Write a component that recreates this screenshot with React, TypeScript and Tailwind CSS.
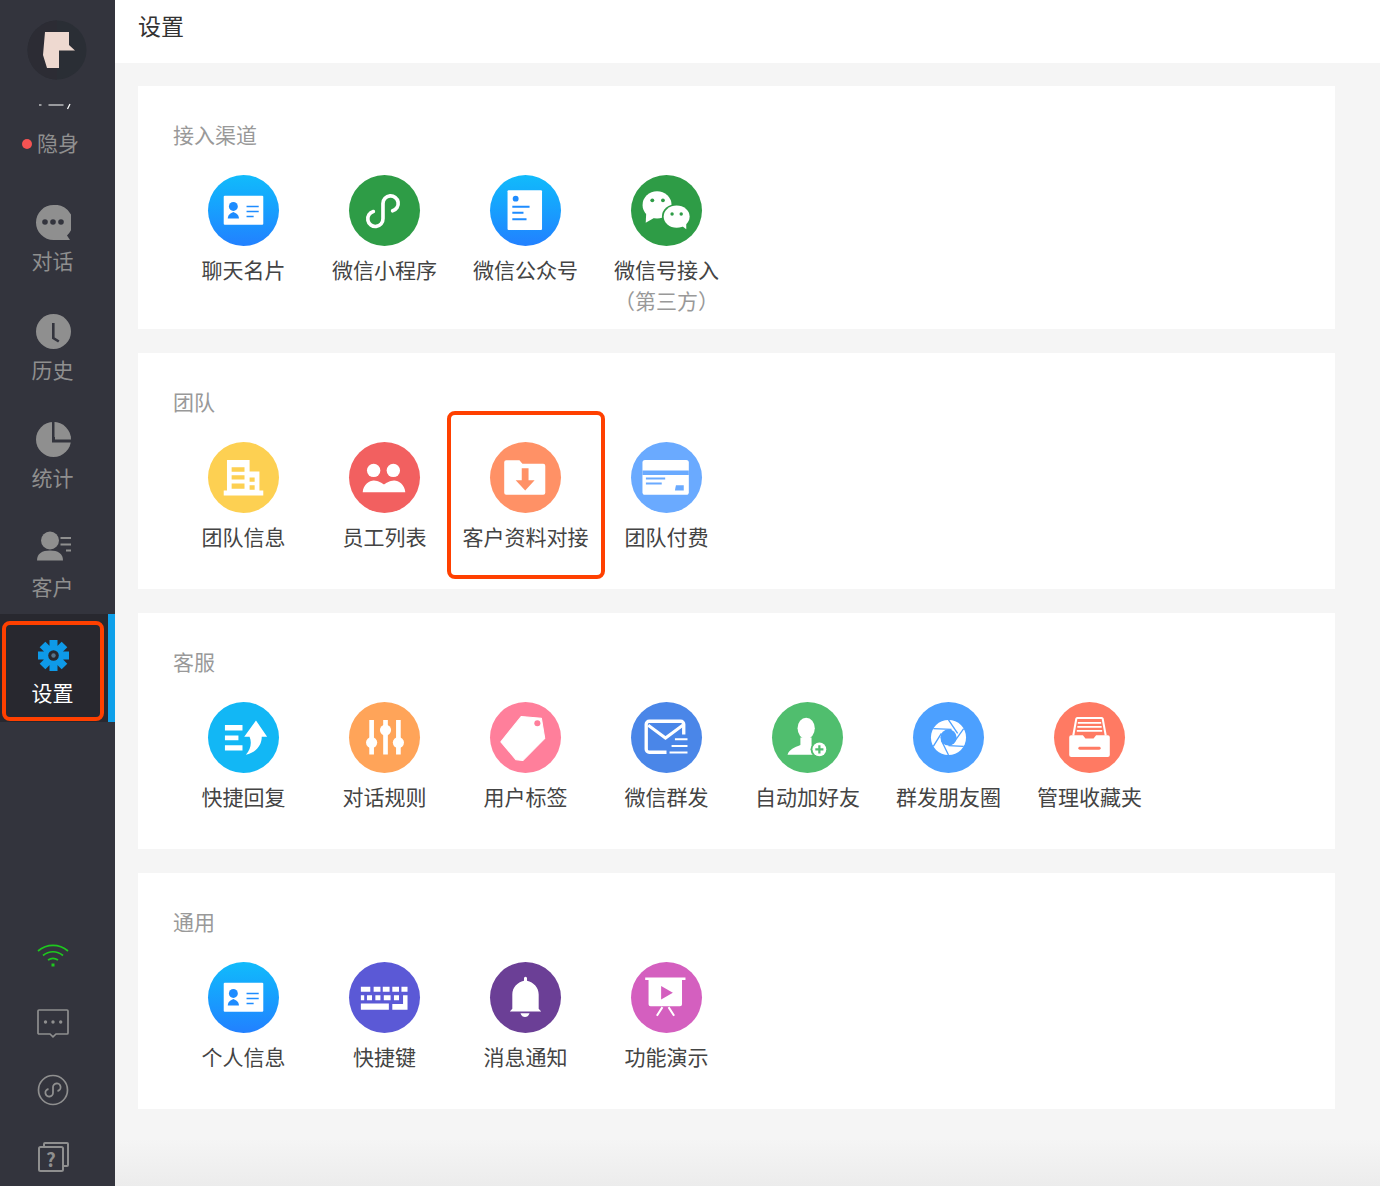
import type { ReactNode } from "react";

const GREY = "#8f8f8f";
const DARK = "#33343d";

function Glyph({ children }: Readonly<{ children: ReactNode }>) {
  return (
    <svg viewBox="0 0 70 70" className="size-full" aria-hidden>
      {children}
    </svg>
  );
}

function IdCard({ color = "#1e8cff" }: Readonly<{ color?: string }>) {
  return (
    <Glyph>
      <rect x="15.5" y="20.5" width="39" height="28.5" rx="1" fill="#fff" />
      <circle cx="25" cy="31" r="4.4" fill={color} />
      <path d="M19.5 43c0-4 3-5.5 5.5-6.5 2.5 1 5.5 2.5 5.5 6.5z" fill={color} />
      <path d="M38 31h12M38 36h12M38 41h7" stroke={color} strokeWidth="1.5" />
    </Glyph>
  );
}

function MiniProgram() {
  return (
    <Glyph>
      <path
        d="M24 36A7.5 7.5 0 1 0 33.5 43V28A7.5 7.5 0 1 1 43 35.3"
        fill="none"
        stroke="#fff"
        strokeWidth="3.6"
        strokeLinecap="round"
      />
    </Glyph>
  );
}

function OfficialDoc() {
  return (
    <Glyph>
      <rect x="17.3" y="15" width="34" height="39.3" rx="1" fill="#fff" />
      <circle cx="25.3" cy="23.3" r="2.9" fill="#1e8cff" />
      <path d="M22 31.3h17M22 37.3h11M22 43.7h14" stroke="#1e8cff" strokeWidth="2" />
    </Glyph>
  );
}

function WeChat() {
  return (
    <Glyph>
      <ellipse cx="25.7" cy="29.5" rx="14.3" ry="13.5" fill="#fff" />
      <path d="M15 38l-0.500 9 9-5z" fill="#fff" />
      <circle cx="21" cy="25" r="1.9" fill="#2e9c46" />
      <circle cx="31.500" cy="25" r="1.9" fill="#2e9c46" />
      <ellipse cx="45" cy="41" rx="14.500" ry="12.500" fill="#2e9c46" />
      <ellipse cx="45" cy="41" rx="12.800" ry="11" fill="#fff" />
      <path d="M50 50l4.500 3.500v-7z" fill="#fff" />
      <circle cx="40.500" cy="38.500" r="1.700" fill="#2e9c46" />
      <circle cx="49.500" cy="38.500" r="1.700" fill="#2e9c46" />
    </Glyph>
  );
}

function Building() {
  const c = "#fdd052";
  return (
    <Glyph>
      <path d="M15.500 47.700h3.200v-30H41V29h9.700v18.700h3.800v5h-39z" fill="#fff" />
      <path d="M23.300 25H36v4.300H23.300zM23.300 32.700H36V37H23.300zM23.300 41H36v5H23.300zM41 35h5v4.300h-5zM41 42.700h5V47h-5z" fill={c} />
    </Glyph>
  );
}

function Staff() {
  return (
    <Glyph>
      <circle cx="24.300" cy="28" r="6.600" fill="#fff" />
      <circle cx="43.700" cy="28" r="6.600" fill="#fff" />
      <path d="M13.500 49.500C14 42 20 38 24.500 38c4.500 0 8.500 3 10 4 1.500-1 5.500-4 10-4 4.500 0 10.500 4 11 11.500z" fill="#fff" />
    </Glyph>
  );
}

function FolderDown() {
  return (
    <Glyph>
      <path d="M16 18h13l3 3.500h20.500a2 2 0 0 1 2 2V50a2 2 0 0 1-2 2H16a2 2 0 0 1-2-2V20a2 2 0 0 1 2-2z" fill="#fff" />
      <path d="M31.300 26H38v11.700h6L34.700 47.700 25.300 37.700h6z" fill="#ff9166" />
    </Glyph>
  );
}

function PayCard() {
  const c = "#6aaaff";
  return (
    <Glyph>
      <rect x="11.300" y="17.700" width="45.700" height="34.300" rx="2.500" fill="#fff" />
      <path d="M11.300 28h45.700v4.500H11.300z" fill={c} />
      <path d="M14.700 36h19M14.700 41h15.600" stroke={c} strokeWidth="2" />
      <path d="M44.300 42.700H52v5h-8.700z" fill={c} />
    </Glyph>
  );
}

function QuickReply() {
  return (
    <Glyph>
      <path d="M16.700 22.700H34V28H16.700zM16.700 33H30v4.700H16.700zM16.700 42.700H34v5H16.700z" fill="#fff" />
      <path d="M47.300 18.300 58.300 34.300H53C53 43 47 50 37.300 52 42 47 43.500 40 41 34.300H35.700z" fill="#fff" />
    </Glyph>
  );
}

function Sliders() {
  return (
    <Glyph>
      <path d="M22.300 17.700v34M36 17.700v34M48.700 17.700v34" stroke="#fff" strokeWidth="4.600" />
      <circle cx="22.300" cy="40" r="5.500" fill="#fff" />
      <circle cx="36" cy="27.700" r="5.500" fill="#fff" />
      <circle cx="48.700" cy="40" r="5.500" fill="#fff" />
    </Glyph>
  );
}

function Tag() {
  return (
    <Glyph>
      <path d="M30.700 14.300 50.700 16 54 36 32.300 57.700 25.700 57 10.700 39.300z" fill="#fff" strokeLinejoin="round" stroke="#fff" />
      <circle cx="46.700" cy="21" r="3" fill="#ff7f9b" />
    </Glyph>
  );
}

function MassMail() {
  return (
    <Glyph>
      <path d="M35 49.500H18a3 3 0 0 1-3-3V22a3 3 0 0 1 3-3h31a3 3 0 0 1 3 3v10" fill="none" stroke="#fff" strokeWidth="3.300" />
      <path d="M17 23l17 12.500L51 23" fill="none" stroke="#fff" strokeWidth="3" />
      <path d="M43.300 36.700h12.400M40 43.300h15.700M38 49.700h17.700" stroke="#fff" strokeWidth="2" />
    </Glyph>
  );
}

function AddFriend() {
  return (
    <Glyph>
      <ellipse cx="33.700" cy="26" rx="8.500" ry="10.500" fill="#fff" />
      <path d="M15.300 52C17 47 22 45 28 42.500V35h11v7.500c3 1.500 6 2.500 8 4.500v5z" fill="#fff" />
      <circle cx="46.700" cy="46.700" r="8.700" fill="#50be6e" />
      <circle cx="46.700" cy="46.700" r="6.800" fill="#fff" />
      <path d="M46.700 42.700v8M42.700 46.700h8" stroke="#50be6e" strokeWidth="2.200" />
    </Glyph>
  );
}

function Aperture() {
  const c = "#4ca0ff";
  return (
    <Glyph>
      <circle cx="35" cy="35" r="17.300" fill="#fff" />
      <g stroke={c} strokeWidth="1.300">
        <path d="M35 17.700 44 31" />
        <path d="M50 26.300 41.500 38" />
        <path d="M50 43.700 35 43" />
        <path d="M35 52.300 28 38" />
        <path d="M20 43.700 28 31" />
        <path d="M20 26.300 38 27" />
      </g>
      <circle cx="35" cy="35" r="8" fill={c} />
    </Glyph>
  );
}

function Drawer() {
  const c = "#ff7a63";
  return (
    <Glyph>
      <path d="M19 33l3-16.500a1 1 0 0 1 1-.800h24a1 1 0 0 1 1 .800L51 33" fill="none" stroke="#fff" strokeWidth="2" />
      <path d="M23.500 20.500h23M23 24.500h24M22.500 28.500h25" stroke="#fff" strokeWidth="1.800" />
      <path d="M17 32.700h11.500L31 36h8l2.500-3.300H53a2 2 0 0 1 2 2v17.600a2 2 0 0 1-2 2H17a2 2 0 0 1-2-2V34.700a2 2 0 0 1 2-2z" fill="#fff" />
      <rect x="24" y="44.200" width="22" height="2.800" rx="1.400" fill={c} />
    </Glyph>
  );
}

function Keyboard() {
  return (
    <Glyph>
      <path
        d="M11.700 24.300h9.300v5h-9.300zM24.300 24.300H31v5h-6.700zM33.300 24.300H40v5h-6.700zM42.700 24.300h6.600v5h-6.600zM51.700 24.300h6v5h-6zM11.700 32.700h3.300v5h-3.300zM17.700 32.700h5v5h-5zM26 32.700h5v5h-5zM34.300 32.700H41v5h-6.700zM44.300 32.700h5v5h-5zM53.300 32.700h4.400V47H42.700v-5.700h10.600zM11.700 41h27.600v6H11.700z"
        fill="#fff"
      />
    </Glyph>
  );
}

function Bell() {
  return (
    <Glyph>
      <path d="M33.500 16a1.500 1.500 0 0 1 3 0v2.500C43 20 48 25 48 32v14l2.500 2.800h-31L22 46V32c0-7 5-12 11.500-13.500z" fill="#fff" />
      <path d="M30 50.500h9C38 53 36.500 54.300 34.500 54.300S31 53 30 50.500z" fill="#fff" />
    </Glyph>
  );
}

function Demo() {
  return (
    <Glyph>
      <path d="M14 15.300h39.700v2.400h-3.400v24a2 2 0 0 1-2 2H19.300a2 2 0 0 1-2-2v-24H14z" fill="#fff" />
      <path d="M29.700 23.700 41.300 30.300 29.700 37z" fill="#d45fbf" />
      <path d="M31 44.500 25.500 53M37 44.500 42.500 53" stroke="#fff" strokeWidth="2" />
    </Glyph>
  );
}

type Entry = {
  label: string;
  sub?: string;
  bg: string;
  icon: ReactNode;
  marked?: boolean;
};

const SKY = "bg-linear-to-b from-[#12bbfb] to-[#2280ff]";

const SECTIONS: { title: string; pb: string; items: Entry[] }[] = [
  {
    title: "接入渠道",
    pb: "pb-[14px]",
    items: [
      { label: "聊天名片", bg: SKY, icon: <IdCard /> },
      { label: "微信小程序", bg: "bg-[#2e9c46]", icon: <MiniProgram /> },
      { label: "微信公众号", bg: SKY, icon: <OfficialDoc /> },
      { label: "微信号接入", sub: "（第三方）", bg: "bg-[#2e9c46]", icon: <WeChat /> },
    ],
  },
  {
    title: "团队",
    pb: "pb-[38px]",
    items: [
      { label: "团队信息", bg: "bg-[#fdd052]", icon: <Building /> },
      { label: "员工列表", bg: "bg-[#f26060]", icon: <Staff /> },
      { label: "客户资料对接", bg: "bg-[#ff9166]", icon: <FolderDown />, marked: true },
      { label: "团队付费", bg: "bg-[#6aaaff]", icon: <PayCard /> },
    ],
  },
  {
    title: "客服",
    pb: "pb-[38px]",
    items: [
      { label: "快捷回复", bg: "bg-[#12b7f5]", icon: <QuickReply /> },
      { label: "对话规则", bg: "bg-[#ffa459]", icon: <Sliders /> },
      { label: "用户标签", bg: "bg-[#ff7f9b]", icon: <Tag /> },
      { label: "微信群发", bg: "bg-[#4a86e8]", icon: <MassMail /> },
      { label: "自动加好友", bg: "bg-[#50be6e]", icon: <AddFriend /> },
      { label: "群发朋友圈", bg: "bg-[#4ca0ff]", icon: <Aperture /> },
      { label: "管理收藏夹", bg: "bg-[#ff7a63]", icon: <Drawer /> },
    ],
  },
  {
    title: "通用",
    pb: "pb-[38px]",
    items: [
      { label: "个人信息", bg: SKY, icon: <IdCard /> },
      { label: "快捷键", bg: "bg-[#5b59d6]", icon: <Keyboard /> },
      { label: "消息通知", bg: "bg-[#6b3f96]", icon: <Bell /> },
      { label: "功能演示", bg: "bg-[#d45fbf]", icon: <Demo /> },
    ],
  },
];

function SettingItem({ item }: Readonly<{ item: Entry }>) {
  return (
    <div className="relative flex w-[141px] flex-col items-center">
      {item.marked && (
        <div className="absolute -top-[31px] -right-[9px] -bottom-[28px] -left-[8px] rounded-lg border-4 border-[#ff4000]" />
      )}
      <div className={`size-[71px] rounded-full ${item.bg}`}>{item.icon}</div>
      <span className="mt-2 text-[21px] leading-[30px] whitespace-nowrap text-[#444]">
        {item.label}
      </span>
      {item.sub && (
        <span className="mt-px text-[21px] leading-[30px] whitespace-nowrap text-[#999]">
          {item.sub}
        </span>
      )}
    </div>
  );
}

const ChatIcon = (
  <svg viewBox="0 0 35 35" className="size-[35px]" aria-hidden>
    <path d="M17.500 0a17.500 17.500 0 1 0 0 35H34l-3-4.500A17.500 17.500 0 0 0 17.500 0z" fill={GREY} />
    <g fill={DARK}>
      <circle cx="9" cy="17" r="2.800" />
      <circle cx="17" cy="17" r="2.800" />
      <circle cx="25" cy="17" r="2.800" />
    </g>
  </svg>
);

const ClockIcon = (
  <svg viewBox="0 0 35 35" className="size-[35px]" aria-hidden>
    <circle cx="17.500" cy="17.500" r="17.500" fill={GREY} />
    <path d="M17.300 9v15l5.500 3.500" fill="none" stroke={DARK} strokeWidth="2.600" />
  </svg>
);

const PieIcon = (
  <svg viewBox="0 0 35 35" className="size-[35px]" aria-hidden>
    <circle cx="17.500" cy="17.500" r="17.500" fill={GREY} />
    <path d="M17.500 0v19H35" fill="none" stroke={DARK} strokeWidth="3" />
    <path d="M19 0v15h16" fill="none" stroke={GREY} strokeWidth="1" />
  </svg>
);

const CustomerIcon = (
  <svg viewBox="0 0 35 35" className="size-[35px]" aria-hidden>
    <circle cx="14" cy="9.500" r="9" fill={GREY} />
    <path d="M1 29.500c0-7 5-10 13-10s13 3 13 10z" fill={GREY} />
    <path d="M24.500 7H35M24.500 13.500H35M30 19.500H35" stroke={GREY} strokeWidth="2.200" />
  </svg>
);

const GEAR_TEETH = [0, 45, 90, 135];

const GearIcon = (
  <svg viewBox="0 0 35 35" className="size-[35px]" aria-hidden>
    <g fill="#0e9ae8">
      {GEAR_TEETH.map((deg) => (
        <rect key={deg} x="13.500" y="2" width="8" height="31" transform={`rotate(${deg} 17.500 17.500)`} />
      ))}
      <circle cx="17.500" cy="17.500" r="10.500" />
    </g>
    <circle cx="17.500" cy="17.500" r="5.300" fill="#28282f" />
    <circle cx="17.500" cy="17.500" r="2.200" fill="#56738a" />
  </svg>
);

const NAV = [
  { label: "对话", icon: ChatIcon, h: "h-[109px]" },
  { label: "历史", icon: ClockIcon, h: "h-[108px]" },
  { label: "统计", icon: PieIcon, h: "h-[109px]" },
  { label: "客户", icon: CustomerIcon, h: "h-[108px]" },
];

function Sidebar() {
  return (
    <aside className="flex h-full w-[115px] shrink-0 flex-col bg-[#33343d]">
      <svg viewBox="0 0 60 60" className="mt-5 ml-[27px] size-[60px] shrink-0" aria-hidden>
        <circle cx="30" cy="30" r="29.500" fill="#2a2e35" />
        <path d="M30 .500a29.500 29.500 0 0 0 0 59z" fill="#2c2c34" />
        <path d="M18 12h24v13l6 5.500H32V48H20l-4-13z" fill="#eed9d0" />
      </svg>
      <svg viewBox="0 0 115 10" className="mt-5 h-2.5 w-[115px] shrink-0" aria-hidden>
        <path d="M39 5h2.500M48.500 5h15" stroke="#fff" strokeWidth="1.200" />
        <path d="M70 4 67.500 9" stroke="#fff" strokeWidth="1.300" />
      </svg>
      <div className="mt-[17px] flex items-center pl-[22px]">
        <span className="mt-[3px] size-2.5 rounded-full bg-[#f55353]" />
        <span className="ml-[5px] text-[21px] leading-[30px] text-[#8f8f8f]">隐身</span>
      </div>
      <nav className="mt-[23px] flex flex-col">
        {NAV.map((n) => (
          <div key={n.label} className={`flex w-[106px] flex-col items-center pt-[25px] ${n.h}`}>
            {n.icon}
            <span className="mt-[5px] mr-px text-[21px] leading-[30px] text-[#8f8f8f]">{n.label}</span>
          </div>
        ))}
        <div className="relative h-[108px] border-r-[7px] border-[#0ea0ea] bg-[#28282f]">
          <div className="flex w-[106px] flex-col items-center pt-6">
            {GearIcon}
            <span className="mt-1 mr-px text-[21px] leading-[30px] text-white">设置</span>
          </div>
          <div className="absolute top-[7px] left-0.5 h-[100px] w-[102px] rounded-lg border-4 border-[#ff4000]" />
        </div>
      </nav>
      <div className="mt-auto flex w-[105px] flex-col items-center gap-[35px] pb-[13px]">
        <svg viewBox="0 0 32 32" className="size-8" fill="none" stroke="#1ec81e" strokeWidth="1.700" aria-hidden>
          <path d="M1 11C10 3.500 22 3.500 31 11" />
          <path d="M6 15.500C12 10.500 20 10.500 26 15.500" />
          <path d="M11 20C14 18 18 18 21 20" />
          <rect x="14.500" y="23.500" width="3" height="3" fill="#1ec81e" stroke="none" />
        </svg>
        <svg viewBox="0 0 32 32" className="size-8" fill="none" stroke={GREY} strokeWidth="1.700" aria-hidden>
          <path d="M2 3h28a1 1 0 0 1 1 1v22a1 1 0 0 1-1 1H19l-3 2.800-3-2.800H2a1 1 0 0 1-1-1V4a1 1 0 0 1 1-1z" />
          <circle cx="8.500" cy="15" r="1.700" fill={GREY} stroke="none" />
          <circle cx="16" cy="15" r="1.700" fill={GREY} stroke="none" />
          <circle cx="23.700" cy="15" r="1.700" fill={GREY} stroke="none" />
        </svg>
        <svg viewBox="0 0 32 32" className="size-8" fill="none" stroke={GREY} strokeWidth="1.700" aria-hidden>
          <circle cx="16" cy="16" r="14.500" />
          <path d="M11.500 15A3.800 3.800 0 1 0 16 18.500V13.500A3.800 3.800 0 1 1 20.500 17" strokeWidth="1.800" />
        </svg>
        <svg viewBox="0 0 32 32" className="size-8" fill="none" stroke={GREY} strokeWidth="2" aria-hidden>
          <path d="M7 5.500V3a1 1 0 0 1 1-1h22a1 1 0 0 1 1 1v21a1 1 0 0 1-1 1h-3" />
          <rect x="2" y="6" width="24" height="24" rx="1.500" />
          <text x="14" y="25.500" textAnchor="middle" fontSize="19" fontWeight="700" fill={GREY} stroke="none">?</text>
        </svg>
      </div>
    </aside>
  );
}

export default function App() {
  return (
    <div className="flex h-[1186px] w-[1380px] overflow-hidden font-['Noto_Sans_CJK_SC','Liberation_Sans',sans-serif]">
      <Sidebar />
      <main className="flex min-w-0 flex-1 flex-col bg-[linear-gradient(to_bottom,#f5f5f5_96%,#ececec_100%)]">
        <header className="h-[63px] shrink-0 bg-white pt-2.5 pl-[23px] text-[23px] leading-[30px] text-[#333]">
          设置
        </header>
        <div className="flex flex-col gap-6 pt-[23px] pr-[45px] pl-[23px]">
          {SECTIONS.map((s) => (
            <section key={s.title} className={`bg-white pt-[33px] pl-[35px] ${s.pb}`}>
              <h2 className="text-[21px] leading-[30px] font-normal text-[#999]">{s.title}</h2>
              <div className="mt-[26px] flex">
                {s.items.map((item) => (
                  <SettingItem key={item.label} item={item} />
                ))}
              </div>
            </section>
          ))}
        </div>
      </main>
    </div>
  );
}
